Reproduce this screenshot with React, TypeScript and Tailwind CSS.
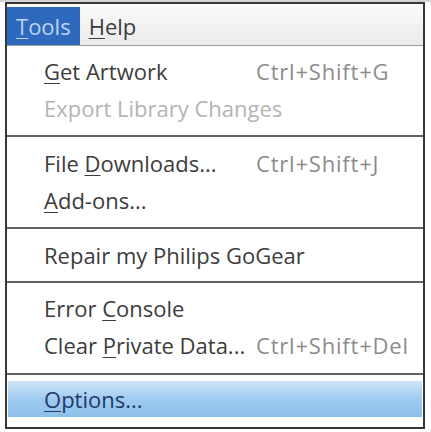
import type { ReactNode } from "react";

const font = { fontFamily: '"Open Sans", "Noto Sans", sans-serif' };

function U({ children }: { children: ReactNode }) {
  return <span className="underline decoration-1 underline-offset-[3px]">{children}</span>;
}

function Item({
  label,
  shortcut,
  disabled,
}: {
  label: ReactNode;
  shortcut?: string;
  disabled?: boolean;
}) {
  return (
    <div className="flex h-[37px] items-center pl-[37px] whitespace-nowrap">
      <span className={`w-[212px] ${disabled ? "text-[#b4b4b4]" : "text-[#3c3c3c]"}`}>{label}</span>
      {shortcut && <span className="tracking-[0.8px] text-[#8c8c8c]">{shortcut}</span>}
    </div>
  );
}

function Separator() {
  return <div className="h-[2px] bg-[#626262]" />;
}

export default function App() {
  return (
    <div className="h-[432px] w-[431px] overflow-hidden bg-white" style={font}>
      <div className="h-[2px] bg-[#d2d2d2]" />
      <div className="ml-[5px] flex h-[427px] w-[420px] flex-col border-2 border-[#383838] text-[22px] leading-none">
        {/* Menu bar */}
        <div className="flex h-[42px] items-end border-b border-[#9a9a9a] bg-gradient-to-b from-[#fafafa] to-[#ebebeb]">
          <div className="flex h-[38px] items-center bg-[#2f69bd] px-[9px] text-[#bdd5f0]">
            <U>T</U>ools
          </div>
          <div className="flex h-[38px] items-center px-[9px] text-[#3c3c3c]">
            <U>H</U>elp
          </div>
        </div>

        {/* Body */}
        <div className="flex flex-1 flex-col">
          <div className="pt-[6px] pb-[9px]">
            <Item label={<><U>G</U>et Artwork</>} shortcut="Ctrl+Shift+G" />
            <Item label="Export Library Changes" disabled />
          </div>
          <Separator />
          <div className="pt-[7px] pb-[9px]">
            <Item label={<>File <U>D</U>ownloads...</>} shortcut="Ctrl+Shift+J" />
            <Item label={<><U>A</U>dd-ons...</>} />
          </div>
          <Separator />
          <div className="pt-[7px] pb-[8px]">
            <Item label="Repair my Philips GoGear" />
          </div>
          <Separator />
          <div className="pt-[6px] pb-[10px]">
            <Item label={<>Error <U>C</U>onsole</>} />
            <Item label={<>Clear <U>P</U>rivate Data...</>} shortcut="Ctrl+Shift+Del" />
          </div>
          <Separator />
          <div className="flex-1 px-px pt-[6px]">
            <div className="flex h-[36px] items-center bg-gradient-to-b from-[#cfe4f7] via-[#9fcbf0] to-[#8cbfea] pl-[36px] text-[#1f3a6a]">
              <U>O</U>ptions...
            </div>
          </div>
        </div>
      </div>
    </div>
  );
}
